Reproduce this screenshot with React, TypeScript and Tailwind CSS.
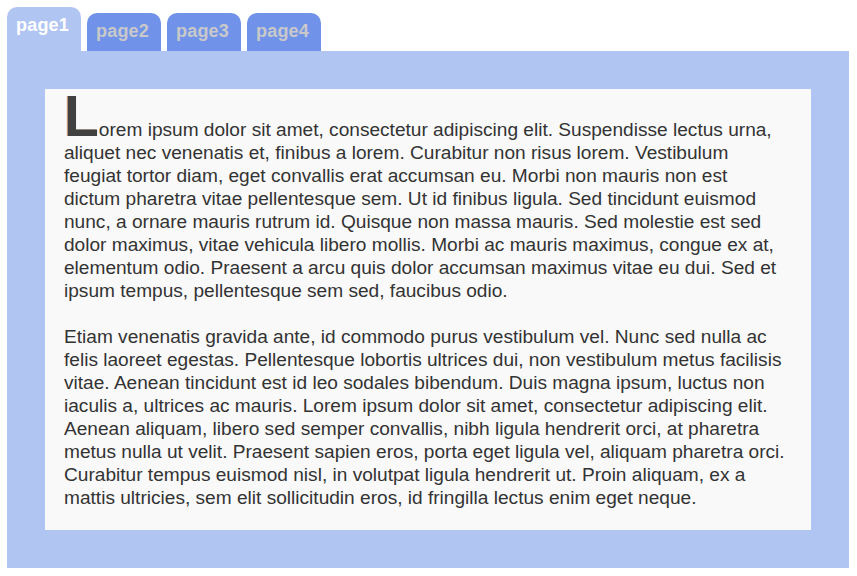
import React, { useState } from 'react';

const tabs = ['page1', 'page2', 'page3', 'page4'];

// Each paragraph is kept as its set lines so the text block breaks the same way everywhere
const paragraphs = [
  [
    'orem ipsum dolor sit amet, consectetur adipiscing elit. Suspendisse lectus urna,',
    'aliquet nec venenatis et, finibus a lorem. Curabitur non risus lorem. Vestibulum',
    'feugiat tortor diam, eget convallis erat accumsan eu. Morbi non mauris non est',
    'dictum pharetra vitae pellentesque sem. Ut id finibus ligula. Sed tincidunt euismod',
    'nunc, a ornare mauris rutrum id. Quisque non massa mauris. Sed molestie est sed',
    'dolor maximus, vitae vehicula libero mollis. Morbi ac mauris maximus, congue ex at,',
    'elementum odio. Praesent a arcu quis dolor accumsan maximus vitae eu dui. Sed et',
    'ipsum tempus, pellentesque sem sed, faucibus odio.',
  ],
  [
    'Etiam venenatis gravida ante, id commodo purus vestibulum vel. Nunc sed nulla ac',
    'felis laoreet egestas. Pellentesque lobortis ultrices dui, non vestibulum metus facilisis',
    'vitae. Aenean tincidunt est id leo sodales bibendum. Duis magna ipsum, luctus non',
    'iaculis a, ultrices ac mauris. Lorem ipsum dolor sit amet, consectetur adipiscing elit.',
    'Aenean aliquam, libero sed semper convallis, nibh ligula hendrerit orci, at pharetra',
    'metus nulla ut velit. Praesent sapien eros, porta eget ligula vel, aliquam pharetra orci.',
    'Curabitur tempus euismod nisl, in volutpat ligula hendrerit ut. Proin aliquam, ex a',
    'mattis ultricies, sem elit sollicitudin eros, id fringilla lectus enim eget neque.',
  ],
];

const App = () => {
  const [active, setActive] = useState(0);

  return (
    <div className="w-[857px] h-[576px] bg-white pl-[7px] pr-[8px] pt-[7px] pb-[8px] flex flex-col font-['Liberation_Sans',Arial,sans-serif]">
      {/* Tab strip */}
      <div className="flex items-end gap-[6px]">
        {tabs.map((tab, i) => (
          <button
            key={tab}
            onClick={() => setActive(i)}
            className={`w-[74px] flex items-start rounded-t-[10px] pl-[9px] pt-[8px] text-left text-[18px] leading-[20px] font-bold tracking-[0.2px]
              ${i === active ? 'h-[44px] bg-[#b1c5f3] text-white' : 'h-[38px] bg-[#7093e9] text-[#c9c9c9]'}`}
          >
            {tab}
          </button>
        ))}
      </div>

      {/* Panel */}
      <div className="flex-1 bg-[#b1c5f3] p-[38px]">
        <div className="h-full bg-[#f9f9f9] pl-[19px] pr-[19px] pt-[5px] pb-[21px] text-[19.1px] leading-[23px] text-[#333333]">
          {paragraphs.map((lines, i) => (
            <p key={i} className={i > 0 ? 'mt-[23px]' : ''}>
              {lines.map((line, j) => (
                <span key={j} className="block whitespace-nowrap">
                  {i === 0 && j === 0 && (
                    <span className="text-[57px] leading-[44px] font-bold text-[#414141] [text-shadow:-1px_0_0_rgba(190,110,40,0.55)]">
                      L
                    </span>
                  )}
                  {line}
                </span>
              ))}
            </p>
          ))}
        </div>
      </div>
    </div>
  );
};

export default App;
